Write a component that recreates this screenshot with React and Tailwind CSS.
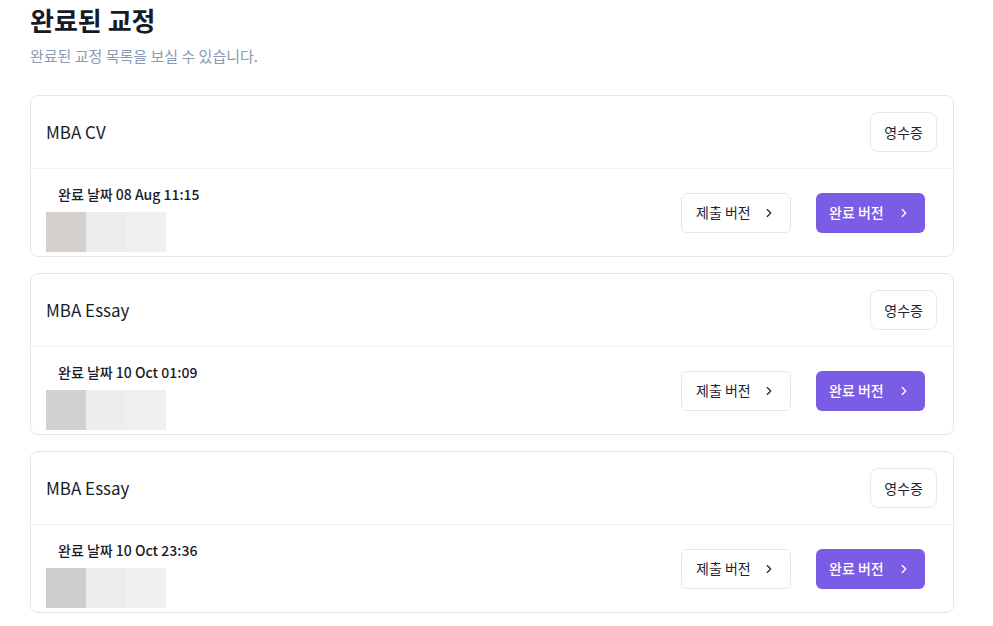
import React from "react";
import { ChevronRight } from "lucide-react";

const items = [
  { title: "MBA CV", date: "08 Aug 11:15", thumbs: ["bg-[#d3d0ce]", "bg-[#ececec]", "bg-[#f0f0f0]"] },
  { title: "MBA Essay", date: "10 Oct 01:09", thumbs: ["bg-[#d3d0d1]", "bg-[#ededed]", "bg-[#f0f0f0]"] },
  { title: "MBA Essay", date: "10 Oct 23:36", thumbs: ["bg-[#cfcecf]", "bg-[#ececec]", "bg-[#f0f0f0]"] },
];

function CompletedCard({ item }) {
  return (
    <div className="rounded-lg border border-[#e2e8f0] bg-white">
      {/* Header: document title and receipt button */}
      <div className="flex h-[73px] items-center justify-between border-b border-[#edf0f4] pl-[15px] pr-[16px]">
        <span className="text-[17px] text-[#1c1c2a]">{item.title}</span>
        <button
          type="button"
          className="h-[40px] rounded-lg border border-[#e5e8ee] px-[13px] text-[14px] text-[#222431]"
        >
          영수증
        </button>
      </div>

      {/* Body: date, thumbnails and version links */}
      <div className="flex items-center justify-between pl-[15px] pr-[28px]">
        <div className="pt-[15px] pb-[4px]">
          <div className="pl-[12px] text-[14px] font-medium leading-[20px] text-[#1a1a28]">
            완료 날짜 {item.date}
          </div>
          <div className="mt-[8px] flex">
            {item.thumbs.map((c, i) => (
              <div key={i} className={`h-[40px] w-[40px] ${c}`} />
            ))}
          </div>
        </div>

        <div className="flex items-center gap-[25px]">
          <button
            type="button"
            className="flex h-[40px] w-[110px] items-center justify-between rounded-md border border-[#e2e8f0] bg-white pl-[14px] pr-[14px] text-[14px] text-[#1f2230]"
          >
            <span>제출 버전</span>
            <ChevronRight className="h-[14px] w-[14px]" strokeWidth={2} />
          </button>
          <button
            type="button"
            className="flex h-[40px] w-[109px] items-center justify-between rounded-md bg-[#7b5ce5] pl-[13px] pr-[14px] text-[14px] font-medium text-white"
          >
            <span>완료 버전</span>
            <ChevronRight className="h-[14px] w-[14px]" strokeWidth={2.2} />
          </button>
        </div>
      </div>
    </div>
  );
}

export default function App() {
  return (
    <div
      className="min-h-[626px] w-[993px] bg-white"
      style={{ fontFamily: '"Noto Sans CJK KR", "Noto Sans", sans-serif' }}
    >
      <div className="w-[954px] pl-[30px]">
        <h1 className="pt-[2px] text-[26px] font-bold leading-[36px] text-[#161a26]">완료된 교정</h1>
        <p className="mt-[7px] text-[15px] leading-[21px] text-[#8a9ab3]">
          완료된 교정 목록을 보실 수 있습니다.
        </p>

        <div className="mt-[29px] flex flex-col gap-[16px]">
          {items.map((item, i) => (
            <CompletedCard key={i} item={item} />
          ))}
        </div>
      </div>
    </div>
  );
}
